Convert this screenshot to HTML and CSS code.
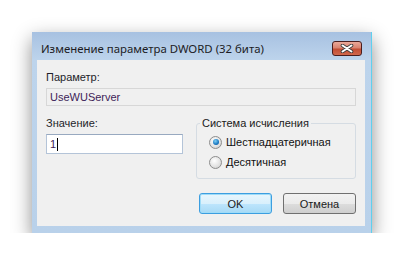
FILE: index.html
```html
<!DOCTYPE html>
<html lang="ru">
  <head>
    <meta charset="UTF-8" />
    <title>Изменение параметра DWORD</title>
    <link rel="stylesheet" href="styles.css">
  </head>
  <body>
    <div class="window">
      <div class="titlebar">
        <span class="title">Изменение параметра DWORD (32 бита)</span>
        <div class="close">
          <svg width="14" height="9" viewBox="0 0 14 9">
            <path d="M2.5 1.5 L11.5 7.5 M11.5 1.5 L2.5 7.5" stroke="#3a3a3a" stroke-width="3.6" stroke-linecap="round" />
            <path d="M2.5 1.5 L11.5 7.5 M11.5 1.5 L2.5 7.5" stroke="#fff" stroke-width="2" stroke-linecap="round" />
          </svg>
        </div>
      </div>

      <div class="client">
        <div class="label first">Параметр:</div>
        <div class="field readonly">UseWUServer</div>

        <div class="row">
          <div class="value-col">
            <div class="label">Значение:</div>
            <div class="field edit">1<span class="caret"></span></div>
          </div>
          <fieldset class="group">
            <legend>Система исчисления</legend>
            <div class="radio checked"><span class="dot"></span>Шестнадцатеричная</div>
            <div class="radio"><span class="dot"></span>Десятичная</div>
          </fieldset>
        </div>

        <div class="buttons">
          <div class="btn default">OK</div>
          <div class="btn">Отмена</div>
        </div>
      </div>
    </div>
  </body>
</html>
```

FILE: styles.css
```css
body {
    margin: 0;
    background: #fff;
    font-family: "Liberation Sans", Arial, sans-serif;
    font-size: 11px;
    color: #111;
}

.window {
    width: 340px;
    height: 201px;
    box-sizing: border-box;
    margin: 32px 0 0 32px;
    padding: 0 6px 7px 5px;
    display: flex;
    flex-direction: column;
    background: linear-gradient(#a7c1e1, #bdd4ec 28px, #b9d1ea);
    border-right: 1px solid #5fd0ee;
    box-shadow: 0 7px 18px rgba(0, 0, 0, 0.45);
}

.titlebar {
    height: 28px;
    display: flex;
    align-items: flex-start;
}

.title {
    flex: 1;
    padding: 10px 0 0 4px;
    font-family: "Noto Sans", sans-serif;
    font-size: 11.4px;
    line-height: 14px;
    color: #1c1c24;
}

.close {
    width: 30px;
    height: 15px;
    box-sizing: border-box;
    margin: 9px 3px 0 0;
    border: 1px solid #4a1e1e;
    border-radius: 3px;
    background: linear-gradient(#eaa99a, #d98370 45%, #c24d34 55%, #d0684c);
    display: flex;
    align-items: center;
    justify-content: center;
}

.client {
    flex: 1;
    background: #f0f0f0;
    padding: 0 9px;
}

.label {
    line-height: 13px;
    color: #1e1e2a;
}

.label.first {
    margin-top: 11px;
}

.field {
    box-sizing: border-box;
    display: flex;
    align-items: center;
    padding-left: 3px;
    color: #3e1d58;
}

.readonly {
    height: 18px;
    margin-top: 4px;
    border: 1px solid #d7d7d7;
    background: #f0f0f0;
}

.row {
    display: flex;
    gap: 13px;
    margin-top: 11px;
}

.value-col {
    width: 137px;
}

.edit {
    height: 20px;
    margin-top: 4px;
    border: 1px solid #b4c4d8;
    border-top-color: #98a9c0;
    background: #fff;
}

.caret {
    width: 1px;
    height: 13px;
    margin-left: 1px;
    background: #000;
}

.group {
    flex: 1;
    height: 62px;
    box-sizing: border-box;
    margin: 0;
    padding: 2px 0 0 12px;
    border: 1px solid #d5dce3;
    border-radius: 3px;
}

.group legend {
    margin-left: -9px;
    padding: 0 2px;
    line-height: 13px;
    color: #1a1a1a;
}

.radio {
    height: 20px;
    display: flex;
    align-items: center;
    gap: 4px;
}

.dot {
    width: 13px;
    height: 13px;
    box-sizing: border-box;
    border: 1px solid #8d8d8d;
    border-radius: 50%;
    background: radial-gradient(circle at 40% 35%, #ffffff, #e4e4e4 55%, #c8c8c8);
    display: flex;
    align-items: center;
    justify-content: center;
}

.radio.checked .dot::after {
    content: "";
    width: 6px;
    height: 6px;
    border-radius: 50%;
    background: radial-gradient(circle at 40% 35%, #7fd0f5, #1a78c2 60%, #0e4f8a);
}

.buttons {
    display: flex;
    justify-content: flex-end;
    gap: 11px;
    margin-top: 14px;
}

.btn {
    width: 73px;
    height: 21px;
    box-sizing: border-box;
    border: 1px solid #707070;
    border-radius: 3px;
    background: linear-gradient(#f2f2f2, #ebebeb 50%, #dddddd 50%, #cfcfcf);
    display: flex;
    align-items: center;
    justify-content: center;
    color: #1a1a1a;
}

.btn.default {
    border-color: #3c9ee0;
    box-shadow: inset 0 0 0 1px #9fdcf8;
    background: linear-gradient(#e8f6fd, #d9f0fc 50%, #bee6fd 50%, #a7d9f5);
}
```
